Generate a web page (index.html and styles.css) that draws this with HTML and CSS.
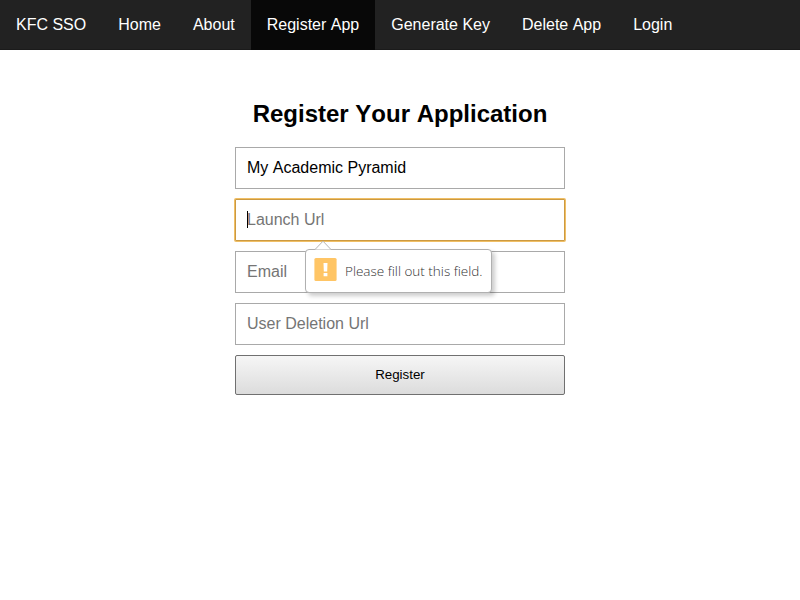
FILE: index.html
```html
<!DOCTYPE html>
<html lang="en">
<head>
<meta charset="utf-8">
<title>KFC SSO</title>
<link rel="stylesheet" href="styles.css">
</head>
<body>
<nav class="navbar">
  <a class="nav-link">KFC SSO</a>
  <a class="nav-link">Home</a>
  <a class="nav-link">About</a>
  <a class="nav-link active">Register App</a>
  <a class="nav-link">Generate Key</a>
  <a class="nav-link">Delete App</a>
  <a class="nav-link">Login</a>
</nav>
<main class="register">
  <h2 class="title">Register Your Application</h2>
  <form class="form">
    <input class="field" type="text" value="My Academic Pyramid">
    <div class="field-wrap">
      <input class="field focused" type="text" placeholder="Launch Url">
      <span class="caret"></span>
      <div class="tooltip">
        <svg class="pointer" width="18" height="10" viewBox="0 0 18 10"><path d="M1 9.5 9 1.2 17 9.5" fill="#fff" stroke="#b4b4b4"/></svg>
        <svg class="warning" width="23" height="23" viewBox="0 0 23 23"><rect x=".4" width="22.200" height="23" rx="1.500" fill="#ffc565"/><path d="M9.500 5h4l-.3 8.500H9.800zM9.600 15h3.800v3.200H9.600z" fill="#fff"/></svg>
        <span class="message">Please fill out this field.</span>
      </div>
    </div>
    <input class="field" type="text" placeholder="Email">
    <input class="field" type="text" placeholder="User Deletion Url">
    <button class="submit" type="button">Register</button>
  </form>
</main>
</body>
</html>
```
FILE: styles.css
```css
* {
  box-sizing: border-box;
}

body {
  margin: 0;
  background: #fff;
  color: #000;
  font-family: "Liberation Sans", Arial, sans-serif;
  font-kerning: none;
}

.navbar {
  display: flex;
  height: 50px;
  background: #222;
  border-bottom: 1px solid #1b1b1b;
}

.nav-link {
  height: 50px;
  padding: 0 16px;
  color: #fff;
  font-size: 16px;
  line-height: 50px;
  white-space: nowrap;
}

.active {
  background: #080808;
}

.register {
  width: 330px;
  margin: 0 auto;
  padding-top: 50px;
}

.title {
  margin: 0 0 19px;
  font-size: 24px;
  line-height: 28px;
  text-align: center;
  white-space: nowrap;
}

.form {
  display: flex;
  flex-direction: column;
  gap: 10px;
}

.field-wrap {
  position: relative;
  height: 42px;
}

.field {
  display: block;
  width: 100%;
  height: 42px;
  margin: 0;
  padding: 0 11px;
  border: 1px solid #a9a9a9;
  border-radius: 0;
  outline: none;
  background: #fff;
  color: #000;
  font: 16px "Liberation Sans", Arial, sans-serif;
  font-kerning: none;
}

.field::placeholder {
  color: #757575;
}

.focused {
  border-color: #cc9a42;
  border-radius: 1px;
  box-shadow: 0 0 0 1px #f0bf65;
}

.caret {
  position: absolute;
  left: 12px;
  top: 12px;
  width: 1px;
  height: 17px;
  background: #000;
}

.tooltip {
  position: absolute;
  z-index: 1;
  left: 70px;
  top: 50px;
  display: flex;
  align-items: flex-start;
  width: 187px;
  height: 44px;
  padding: 8px 8px 0;
  border: 1px solid #b0b0b0;
  border-radius: 4px;
  background: #fff;
  box-shadow: 3px 3px 4px rgba(0, 0, 0, 0.2);
}

.pointer {
  position: absolute;
  left: 8px;
  top: -10px;
}

.warning {
  flex: none;
}

.message {
  margin: 3px 0 0 8px;
  color: #333;
  font: 300 13.5px/20px "Open Sans", sans-serif;
  white-space: nowrap;
}

.submit {
  height: 40px;
  margin: 0;
  padding: 0 0 2px;
  border: 1px solid #707070;
  border-radius: 2px;
  background: linear-gradient(#f6f6f6, #dcdcdc);
  color: #000;
  font: 13.333px "Liberation Sans", Arial, sans-serif;
}
```
